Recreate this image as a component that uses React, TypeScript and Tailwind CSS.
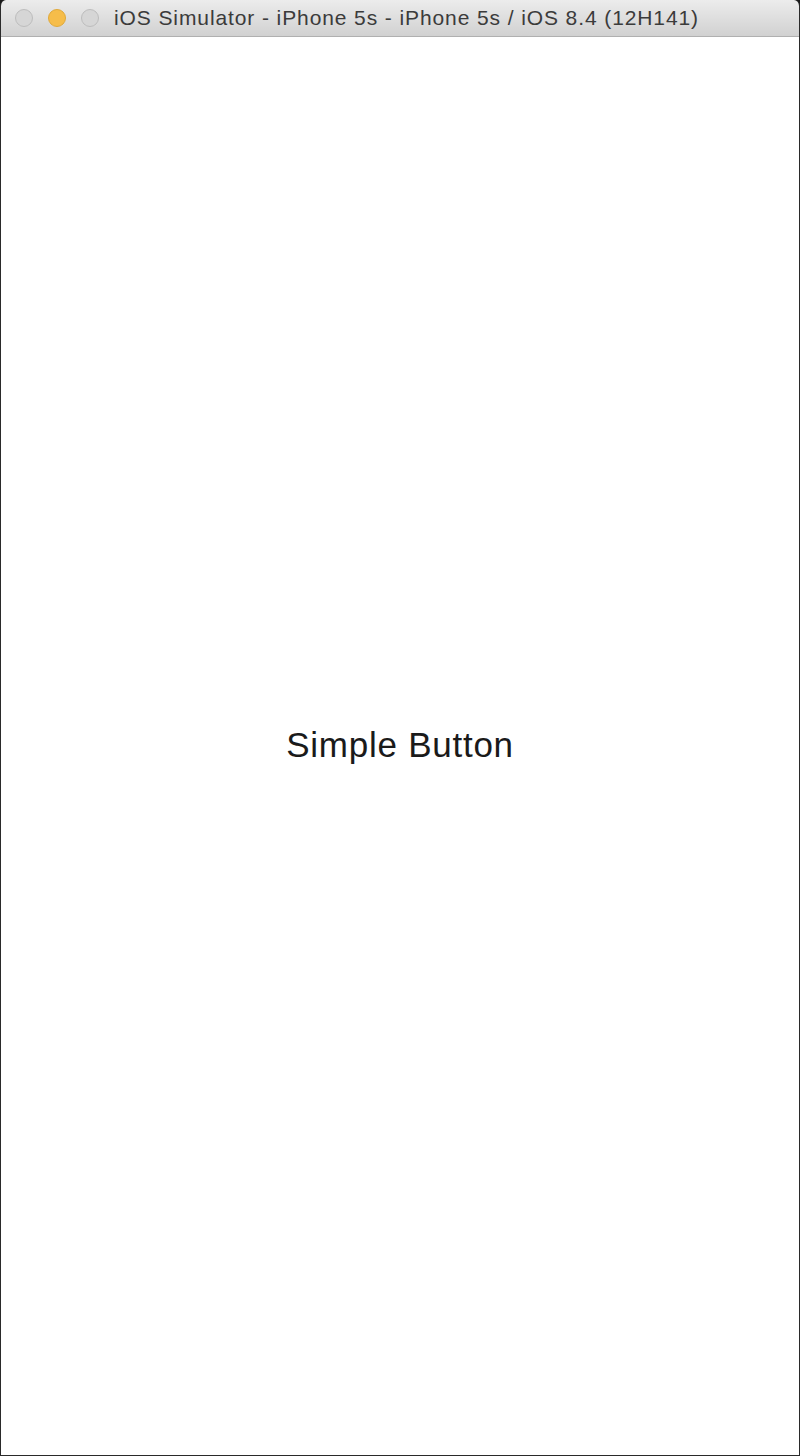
import React from 'react';

const App: React.FC = () => {
  return (
    <div className="w-[800px] h-[1456px] bg-[#1a1a1a] font-['Liberation_Sans',Arial,sans-serif]">
      <div className="flex flex-col h-full rounded-t-[6px] overflow-hidden border-x border-b border-[#2a2a2a]">
        <div className="h-[37px] shrink-0 flex items-center bg-gradient-to-b from-[#ececec] to-[#d1d1d1] border-b border-[#b0b0b0]">
          <div className="flex items-center gap-[15px] pl-[14px]">
            <span className="w-[18px] h-[18px] rounded-full bg-[#d6d6d6] border border-[#bdbdbd]" />
            <span className="w-[18px] h-[18px] rounded-full bg-[#f6bd4a] border border-[#e0a93a]" />
            <span className="w-[18px] h-[18px] rounded-full bg-[#d6d6d6] border border-[#bdbdbd]" />
          </div>
          <div className="ml-[15px] text-[21px] tracking-[0.9px] text-[#3b3b3b] whitespace-nowrap">
            iOS Simulator - iPhone 5s - iPhone 5s / iOS 8.4 (12H141)
          </div>
        </div>
        <div className="flex-1 bg-white flex items-center justify-center">
          <button className="text-[35px] tracking-[0.75px] text-[#1a1a1a] leading-none mt-[-3px]">Simple Button</button>
        </div>
      </div>
    </div>
  );
};

export default App;
